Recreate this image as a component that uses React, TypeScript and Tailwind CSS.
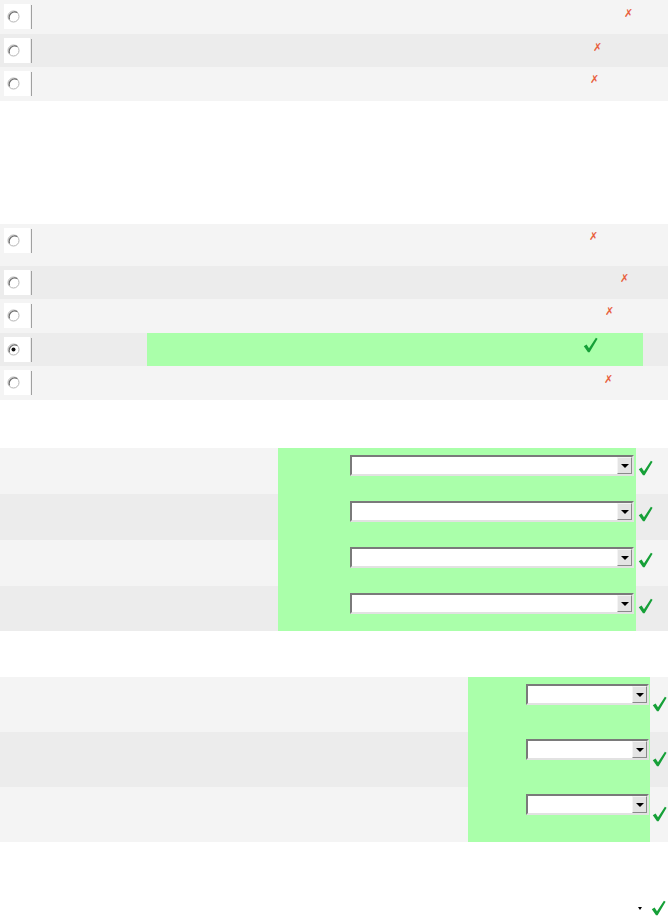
import React from "react";

// Row tints used across every block
const LIGHT = "bg-[#f4f4f4]";
const DARK = "bg-[#ececec]";

function Radio({ checked = false }: { checked?: boolean }) {
  return (
    <svg width="13" height="13" viewBox="0 0 13 13">
      <circle cx="6.5" cy="6.5" r="5.5" fill="#fff" stroke="#b5b5b5" strokeWidth="1" />
      <path d="M2.6 9.4 A5.5 5.5 0 0 1 10.4 2.6" fill="none" stroke="#6e6e6e" strokeWidth="1.2" />
      {checked && <circle cx="6.5" cy="6.5" r="2" fill="#111" />}
    </svg>
  );
}

function Cross() {
  return (
    <span className="block text-[11px] leading-none text-[#e8603c] [font-family:'DejaVu_Sans',sans-serif]">
      ✗
    </span>
  );
}

function Tick() {
  return (
    <svg width="15" height="16" viewBox="0 0 15 16" className="block">
      <path d="M0.8 9.2 L3.6 7.6 L6 11.2 L12.9 0.8 L14.6 1.8 L6.6 15.2 L5 15.2 Z" fill="#16a038" />
    </svg>
  );
}

function Select({ width }: { width: string }) {
  return (
    <div
      className={`${width} flex h-[21px] border-2 border-t-[#7a7a7a] border-l-[#7a7a7a] border-b-[#e2e2e2] border-r-[#e2e2e2] bg-white`}
    >
      <div className="flex-1" />
      <div className="flex w-[15px] items-center justify-center border border-t-[#f4f4f4] border-l-[#f4f4f4] border-b-[#8a8a8a] border-r-[#8a8a8a] bg-[#e4e4e4]">
        <span className="block h-0 w-0 border-x-[4px] border-t-[4px] border-x-transparent border-t-black" />
      </div>
    </div>
  );
}

type ChoiceRow = { h: string; bg: string; markMl: string; markMt: string; ok?: boolean };

function RadioCell({ checked }: { checked?: boolean }) {
  return (
    <>
      <div className="ml-[4px] mt-[4px] flex h-[25px] w-[26px] items-center bg-white pl-[3px]">
        <Radio checked={checked} />
      </div>
      <div className="ml-px mt-[5px] h-[24px] w-px bg-[#a0a0a0]" />
    </>
  );
}

function ChoiceList({ rows }: { rows: ChoiceRow[] }) {
  return (
    <div className="flex flex-col">
      {rows.map((r, i) => (
        <div key={i} className={`flex items-start ${r.h} ${r.bg}`}>
          <RadioCell checked={r.ok} />
          {r.ok ? (
            <div className="ml-[115px] h-full w-[496px] bg-[#aaffaa] pl-[436px] pt-[4px]">
              <Tick />
            </div>
          ) : (
            <div className={`${r.markMl} ${r.markMt}`}>
              <Cross />
            </div>
          )}
        </div>
      ))}
    </div>
  );
}

const FIRST: ChoiceRow[] = [
  { h: "h-[34px]", bg: LIGHT, markMl: "ml-[592px]", markMt: "mt-[8px]" },
  { h: "h-[33px]", bg: DARK, markMl: "ml-[561px]", markMt: "mt-[8px]" },
  { h: "h-[34px]", bg: LIGHT, markMl: "ml-[558px]", markMt: "mt-[7px]" },
];

const SECOND: ChoiceRow[] = [
  { h: "h-[42px]", bg: LIGHT, markMl: "ml-[557px]", markMt: "mt-[7px]" },
  { h: "h-[33px]", bg: DARK, markMl: "ml-[588px]", markMt: "mt-[7px]" },
  { h: "h-[34px]", bg: LIGHT, markMl: "ml-[573px]", markMt: "mt-[7px]" },
  { h: "h-[33px]", bg: DARK, markMl: "", markMt: "", ok: true },
  { h: "h-[34px]", bg: LIGHT, markMl: "ml-[572px]", markMt: "mt-[8px]" },
];

export default function App() {
  return (
    <div className="h-[919px] w-[668px] overflow-hidden bg-white">
      <ChoiceList rows={FIRST} />

      <div className="mt-[123px]">
        <ChoiceList rows={SECOND} />
      </div>

      {/* wide drop-down block */}
      <div className="mt-[48px] flex flex-col">
        {[LIGHT, DARK, LIGHT, DARK].map((bg, i) => (
          <div key={i} className={`flex ${i === 3 ? "h-[45px]" : "h-[46px]"} ${bg}`}>
            <div className="w-[278px]" />
            <div className="w-[358px] bg-[#aaffaa] pl-[72px] pt-[7px]">
              <Select width="w-[284px]" />
            </div>
            <div className="flex-1 pl-[2px] pt-[12px]">
              <Tick />
            </div>
          </div>
        ))}
      </div>

      {/* narrow drop-down block */}
      <div className="mt-[46px] flex flex-col">
        {[LIGHT, DARK, LIGHT].map((bg, i) => (
          <div key={i} className={`flex h-[55px] ${bg}`}>
            <div className="w-[468px]" />
            <div className="w-[182px] bg-[#aaffaa] pl-[58px] pt-[7px]">
              <Select width="w-[123px]" />
            </div>
            <div className="flex-1 pl-[2px] pt-[19px]">
              <Tick />
            </div>
          </div>
        ))}
      </div>

      <div className="mt-[58px] flex items-center pl-[638px]">
        <span className="mt-[1px] block h-0 w-0 border-x-[2px] border-t-[3px] border-x-transparent border-t-black" />
        <div className="ml-[9px]">
          <Tick />
        </div>
      </div>
    </div>
  );
}
